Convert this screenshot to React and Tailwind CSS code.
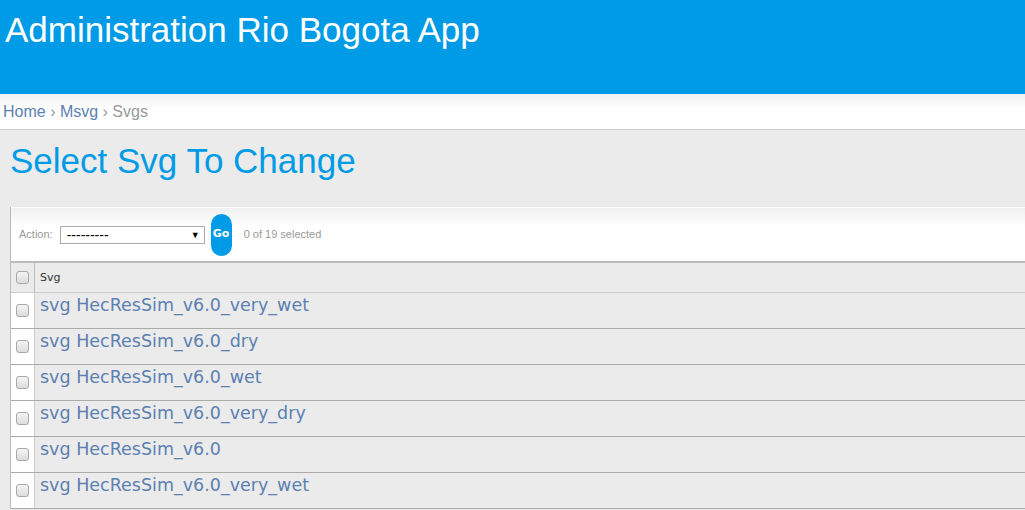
import React from "react";

const rows = [
  "svg HecResSim_v6.0_very_wet",
  "svg HecResSim_v6.0_dry",
  "svg HecResSim_v6.0_wet",
  "svg HecResSim_v6.0_very_dry",
  "svg HecResSim_v6.0",
  "svg HecResSim_v6.0_very_wet",
];

const Checkbox = () => (
  <span className="inline-block w-[13px] h-[13px] rounded-[3px] border border-[#a9a9a9] bg-gradient-to-b from-[#f4f4f4] to-[#dcdcdc]" />
);

const App = () => {
  return (
    <div className="w-[1025px] h-[510px] overflow-hidden bg-[#ebebeb] font-['Liberation_Sans',Arial,sans-serif]">
      {/* Header */}
      <div className="h-[94px] bg-[#009be6] px-[5px] pt-[9px]">
        <h1 className="text-[35px] leading-[42px] text-white">Administration Rio Bogota App</h1>
      </div>

      {/* Breadcrumbs */}
      <div className="h-[36px] bg-gradient-to-b from-[#f0f0f0] to-white to-[40%] border-b border-[#cccccc] px-[3px] pt-[8px] text-[16px] leading-[20px]">
        <span className="text-[#5b80b2]">Home</span>
        <span className="text-[#999]"> › </span>
        <span className="text-[#5b80b2]">Msvg</span>
        <span className="text-[#999]"> › Svgs</span>
      </div>

      {/* Content */}
      <div className="pl-[10px]">
        <h2 className="text-[35px] leading-[42px] text-[#009be6] pt-[10px] pb-[25px]">Select Svg To Change</h2>

        <div className="border-l border-[#bbbbbb]">
          {/* Actions bar */}
          <div className="h-[54px] bg-gradient-to-b from-[#f0f0f0] to-white to-[35%] border-t border-white flex items-center gap-[6px] pl-[8px] text-[11px] text-[#999]">
            <span>Action:</span>
            <div className="ml-[1px] w-[145px] h-[18px] border border-[#aaa] bg-white flex items-center justify-between pl-[6px] pr-[4px] text-[14px] leading-[14px] text-black">
              <span>---------</span>
              <span className="text-[9px]">▼</span>
            </div>
            <button className="w-[21px] h-[42px] rounded-full bg-[#009be6] text-white font-bold text-[11px] font-['DejaVu_Sans',Verdana,sans-serif] flex items-center justify-center">
              Go
            </button>
            <span className="ml-[6px]">0 of 19 selected</span>
          </div>

          {/* Table */}
          <div className="border-t-2 border-[#bbbbbb]">
            <div className="flex h-[30px] border-b border-[#cccccc]">
              <div className="w-[24px] flex items-center justify-center border-r border-[#bbbbbb]">
                <Checkbox />
              </div>
              <div className="flex-1 flex items-center pl-[5px] pt-[1px] text-[11px] text-[#333] font-['DejaVu_Sans',Verdana,sans-serif]">
                Svg
              </div>
            </div>
            {rows.map((r, i) => (
              <div key={i} className="flex h-[36px] border-b border-[#aaaaaa]">
                <div className="w-[24px] bg-white flex items-start pt-[11px] justify-center border-r border-[#cccccc]">
                  <Checkbox />
                </div>
                <div className="flex-1 pl-[5px] pt-[1px] text-[17.5px] leading-[22px] text-[#5b80b2] font-['DejaVu_Sans',Verdana,sans-serif]">
                  {r}
                </div>
              </div>
            ))}
          </div>
        </div>
      </div>
    </div>
  );
};

export default App;
